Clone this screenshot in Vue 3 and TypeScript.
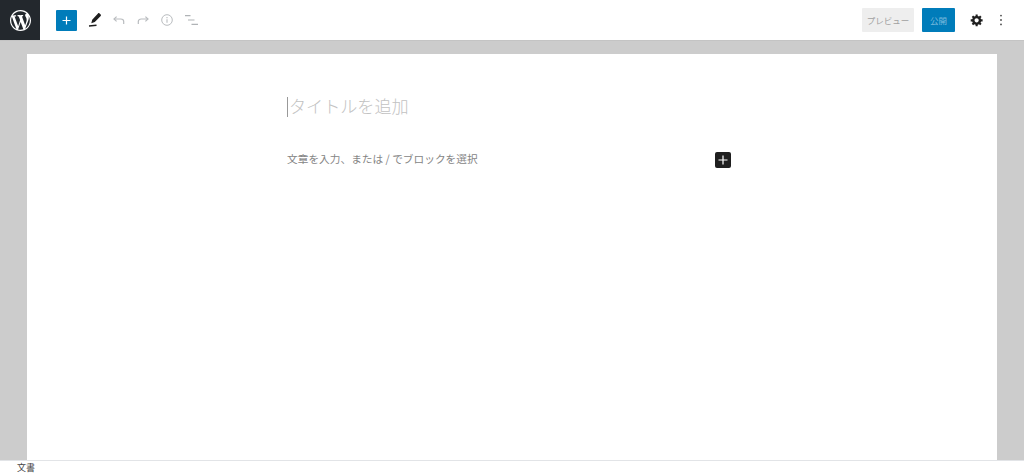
<script setup lang="ts">
const wpLogo =
  "M20 10c0-5.51-4.49-10-10-10C4.48 0 0 4.49 0 10c0 5.52 4.48 10 10 10 5.51 0 10-4.48 10-10zM7.78 15.37L4.37 6.22c.55-.02 1.17-.08 1.17-.08.5-.06.44-1.13-.06-1.11 0 0-1.45.11-2.37.11-.18 0-.37 0-.58-.01C4.12 2.69 6.87 1.11 10 1.11c2.33 0 4.45.87 6.05 2.34-.68-.11-1.65.39-1.65 1.58 0 .74.45 1.36.9 2.1.35.61.55 1.36.55 2.46 0 1.49-1.4 5-1.4 5l-3.03-8.37c.54-.02.82-.17.82-.17.5-.05.44-1.25-.06-1.22 0 0-1.44.12-2.38.12-.87 0-2.33-.12-2.33-.12-.5-.03-.56 1.2-.06 1.22l.92.08 1.26 3.41zM17.41 10c.24-.64.74-1.87.43-4.25.7 1.29 1.05 2.71 1.05 4.25 0 3.29-1.73 6.24-4.4 7.78.97-2.59 1.94-5.2 2.92-7.78zM6.1 18.09C3.12 16.65 1.11 13.53 1.11 10c0-1.3.23-2.48.72-3.59C3.25 10.3 4.67 14.2 6.1 18.09zm4.03-6.63l2.58 6.98c-.86.29-1.76.45-2.71.45-.79 0-1.57-.11-2.29-.33.81-2.38 1.62-4.74 2.42-7.1z";
</script>

<template>
  <div class="editor">
    <header class="topbar">
      <div class="logo">
        <svg width="21" height="21" viewBox="0 0 20 20" fill="#fff"><path :d="wpLogo" /></svg>
      </div>
      <div class="tools">
        <button class="add">
          <svg width="11" height="11" viewBox="0 0 11 11" fill="#fff"><path d="M4.9 1.5h1.2v3.4h3.4v1.2H6.1v3.4H4.9V6.1H1.5V4.9h3.4z" /></svg>
        </button>
        <svg class="pen" width="14" height="14" viewBox="0 0 14 14">
          <path d="M10 .4c.5-.4 1.1-.4 1.5 0l1.2 1.2c.4.4.4 1 0 1.4L6.8 9 3.3 10.2l.9-3.5z" fill="#1e1e1e" />
          <path d="M1 13 8.5 12.3" stroke="#1e1e1e" stroke-width="1.4" fill="none" />
        </svg>
        <svg class="undo" width="12" height="8" viewBox="0 0 12 8" fill="none" stroke="#b9bcbf" stroke-width="1.2">
          <path d="M3.6.6 1 3 3.6 5.4" />
          <path d="M1.2 3h6.6c1.6 0 2.9 1 2.9 2.5V8" />
        </svg>
        <svg class="redo" width="12" height="8" viewBox="0 0 12 8" fill="none" stroke="#b9bcbf" stroke-width="1.2">
          <path d="M8.4.6 11 3 8.4 5.4" />
          <path d="M10.8 3H4.2C2.6 3 1.3 4 1.3 5.5V8" />
        </svg>
        <svg class="info" width="12" height="12" viewBox="0 0 12 12" fill="none" stroke="#b9bcbf">
          <circle cx="6" cy="6" r="5.3" stroke-width="1" />
          <path d="M6 5.2v3.6M6 3v1.2" stroke-width="1.1" />
        </svg>
        <svg class="list" width="13" height="10" viewBox="0 0 13 10" fill="none" stroke="#b0b3b6" stroke-width="1.1">
          <path d="M0 .6h5.5M3 5h6.5M6.5 9.4H13" />
        </svg>
      </div>
      <div class="actions">
        <button class="preview">プレビュー</button>
        <button class="publish">公開</button>
        <svg class="gear" width="14" height="14" viewBox="0 0 20 20" fill="#1e1e1e">
          <path fill-rule="evenodd" d="M18 12h-2.18c-.17.7-.44 1.35-.81 1.93l1.54 1.54-2.1 2.1-1.54-1.54c-.58.36-1.23.63-1.91.79V19H8v-2.18c-.68-.16-1.33-.43-1.91-.79l-1.54 1.54-2.12-2.12 1.54-1.54c-.36-.58-.63-1.23-.79-1.91H1V9.03h2.17c.16-.7.44-1.35.8-1.94L2.43 5.55l2.1-2.1 1.54 1.54c.58-.37 1.24-.64 1.93-.81V2h3v2.18c.68.16 1.33.43 1.91.79l1.54-1.54 2.12 2.12-1.54 1.54c.36.59.64 1.24.8 1.94H18V12zm-8.5 1.5c1.66 0 3-1.34 3-3s-1.34-3-3-3-3 1.34-3 3 1.34 3 3 3z" />
        </svg>
        <svg class="dots" width="4" height="12" viewBox="0 0 4 12" fill="#4a4a4a">
          <circle cx="2" cy="1.6" r=".9" />
          <circle cx="2" cy="6" r=".9" />
          <circle cx="2" cy="10.4" r=".9" />
        </svg>
      </div>
    </header>

    <main class="workspace">
      <section class="canvas">
        <div class="column">
          <h1 class="title"><span class="caret"></span><span class="title-text">タイトルを追加</span></h1>
          <div class="paragraph">
            <p>文章を入力、または / でブロックを選択</p>
            <button class="inline-add">
              <svg width="10" height="10" viewBox="0 0 10 10" fill="#fff"><path d="M4.4.5h1.2v3.9h3.9v1.2H5.6v3.9H4.4V5.6H.5V4.4h3.9z" /></svg>
            </button>
          </div>
        </div>
      </section>
    </main>

    <footer class="status">文書</footer>
  </div>
</template>

<style>
html,
body {
  margin: 0;
  background: #fff;
  overflow: hidden;
}
</style>

<style scoped>
.editor {
  display: flex;
  flex-direction: column;
  height: 476px;
  font-family: "Noto Sans CJK JP", "Noto Sans", sans-serif;
}

button {
  border: 0;
  padding: 0;
  font-family: inherit;
}

.topbar {
  display: flex;
  align-items: center;
  flex: none;
  height: 40px;
  background: #fff;
  border-bottom: 1px solid #c4c4c4;
}

.logo {
  display: flex;
  align-items: center;
  justify-content: center;
  width: 40px;
  height: 40px;
  background: #23282d;
}

.tools {
  display: flex;
  align-items: center;
  margin-left: 16px;
}

.add {
  display: flex;
  align-items: center;
  justify-content: center;
  width: 21px;
  height: 21px;
  border-radius: 1px;
  background: #007cba;
}

.pen,
.undo {
  margin-left: 11px;
}

.redo,
.info,
.list {
  margin-left: 12px;
}

.actions {
  display: flex;
  align-items: center;
  margin-left: auto;
  padding-right: 21px;
}

.preview {
  width: 52px;
  height: 24px;
  background: #eeeeee;
  color: #a0a0a0;
  font-size: 8.5px;
  border-radius: 1px;
}

.publish {
  width: 33px;
  height: 24px;
  margin-left: 8px;
  background: #007cba;
  color: #7dbbdd;
  font-size: 8.5px;
  border-radius: 1px;
}

.gear,
.dots {
  margin-left: 15px;
}

.workspace {
  display: flex;
  flex: 1;
  min-height: 0;
  padding: 13px 27px 0;
  background: #cccccc;
}

.canvas {
  flex: 1;
  display: flex;
  justify-content: center;
  background: #fff;
}

.column {
  width: 450px;
}

.title {
  display: flex;
  align-items: center;
  height: 20px;
  margin: 43px 0 0;
  color: #c2c2c2;
  font-size: 17.1px;
  font-weight: 300;
  line-height: 16px;
  white-space: nowrap;
}

.title-text {
  margin-bottom: 2px;
}

.caret {
  width: 1px;
  height: 20px;
  margin-right: 1px;
  background: #999;
}

.paragraph {
  display: flex;
  align-items: center;
  justify-content: space-between;
  height: 16px;
  margin-top: 35px;
  padding-right: 6px;
}

.paragraph p {
  margin: 0 0 3px;
  color: #858585;
  font-size: 10.7px;
  white-space: nowrap;
}

.inline-add {
  display: flex;
  align-items: center;
  justify-content: center;
  width: 16px;
  height: 16px;
  border-radius: 2px;
  background: #1e1e1e;
}

.status {
  flex: none;
  height: 15px;
  padding-left: 17px;
  background: #fff;
  border-top: 1px solid #e2e4e7;
  color: #444;
  font-size: 9px;
  line-height: 14px;
}
</style>
